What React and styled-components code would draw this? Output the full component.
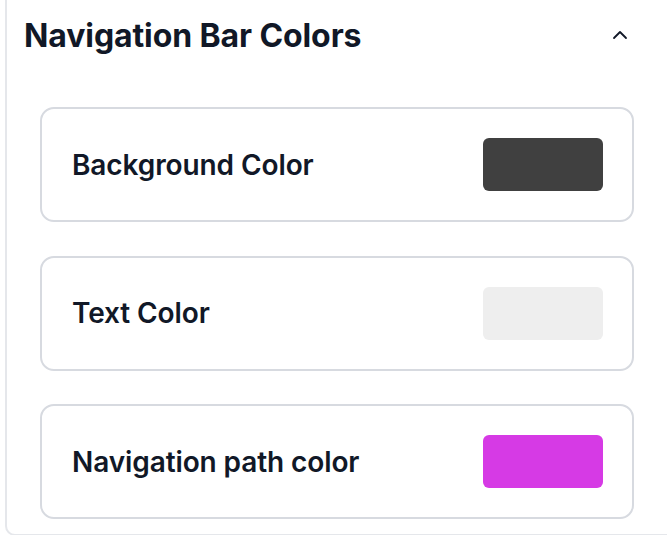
import styled, { createGlobalStyle } from 'styled-components';

const GlobalStyle = createGlobalStyle`
  html, body {
    margin: 0;
    padding: 0;
    background: #ffffff;
    overflow: hidden;
  }
  body {
    font-family: Inter, "Noto Sans", sans-serif;
    color: #111827;
  }
`

const Panel = styled.section`
  margin-left: 5px;
  height: 536px;
  box-sizing: border-box;
  border-left: 2px solid #e5e7eb;
  border-bottom: 2px solid #e5e7eb;
  border-bottom-left-radius: 10px;
  padding: 0 33px 0 0;
`

const Header = styled.div`
  display: flex;
  align-items: center;
  justify-content: space-between;
  height: 70px;
  padding-left: 17px;
  padding-right: 2px;
`

const Title = styled.h2`
  margin: 0;
  font-size: 32px;
  font-weight: 700;
  color: #111827;
  letter-spacing: -0.1px;
`

const Toggle = styled.button`
  display: flex;
  align-items: center;
  justify-content: center;
  width: 24px;
  height: 24px;
  padding: 0;
  border: none;
  background: none;
  color: #111827;
  cursor: pointer;
`

const List = styled.div`
  display: flex;
  flex-direction: column;
  gap: 33.5px;
  padding: 37px 0 0 33px;
`

const Card = styled.div`
  display: flex;
  align-items: center;
  justify-content: space-between;
  height: 115px;
  box-sizing: border-box;
  padding: 0 29px 0 30px;
  border: 2px solid #d7dae0;
  border-radius: 14px;
`

const Label = styled.span`
  font-size: 28px;
  font-weight: 600;
  color: #111827;
  letter-spacing: -0.1px;
`

const Swatch = styled.div`
  width: 120px;
  height: 53px;
  border-radius: 6px;
  background: ${p => p.color};
`

const colors = [
    { label: 'Background Color', color: '#404040' },
    { label: 'Text Color', color: '#eeeeee' },
    { label: 'Navigation path color', color: '#d63ae5' },
]

export default function App() {
    return (
        <>
            <GlobalStyle />
            <Panel>
                <Header>
                    <Title>Navigation Bar Colors</Title>
                    <Toggle aria-label="Collapse">
                        <svg width="24" height="24" viewBox="0 0 24 24" fill="none" stroke="currentColor" strokeWidth="1.8" strokeLinecap="round" strokeLinejoin="round">
                            <path d="M6 15l6-6 6 6" />
                        </svg>
                    </Toggle>
                </Header>
                <List>
                    {colors.map(c => (
                        <Card key={c.label}>
                            <Label>{c.label}</Label>
                            <Swatch color={c.color} />
                        </Card>
                    ))}
                </List>
            </Panel>
        </>
    );
}
